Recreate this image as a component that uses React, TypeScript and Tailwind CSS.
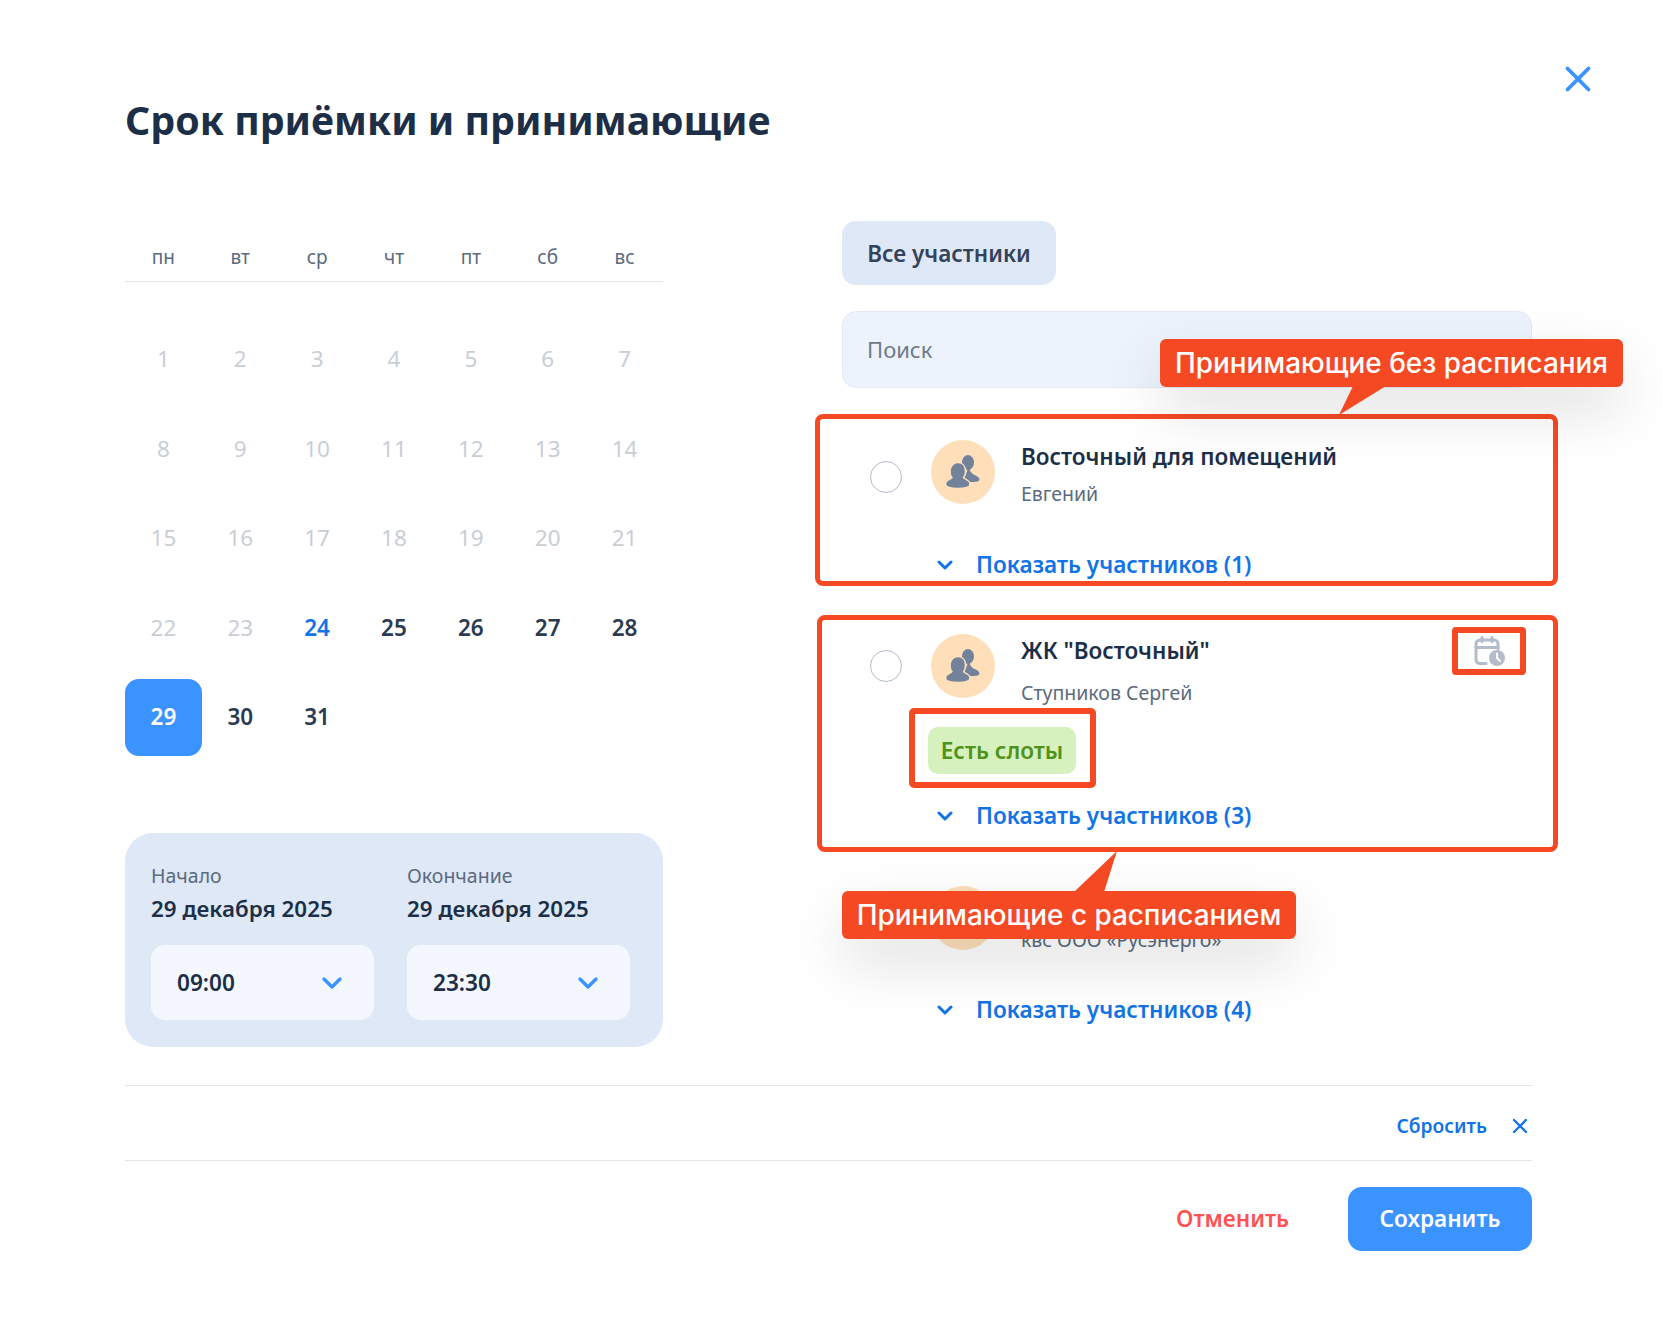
import React from 'react';
import { Search, X, ChevronDown } from 'lucide-react';

const weekDays = ['пн', 'вт', 'ср', 'чт', 'пт', 'сб', 'вс'];
const days = Array.from({ length: 31 }, (_, i) => i + 1);

function GroupIcon() {
  return (
    <svg width="64" height="64" viewBox="0 0 64 64">
      <ellipse cx="37" cy="22.500" rx="6" ry="7.500" fill="#72829b" />
      <path d="M38 26c0 4 2 7 4.500 8.500 3 1.500 6 2.500 6 5 0 1.800-3 2.500-6.500 2.500H32z" fill="#72829b" />
      <path d="M27 22.500c4.500 0 7.500 3.500 7.500 9 0 3-1 5-2 6 0 1.500 6.500 2.500 6.500 6.500 0 3-4.500 4.500-12 4.500s-12.500-1.500-12.500-4.500c0-4 6.500-5 6.500-6.500-1-1-2-3-2-6 0-5.500 3.500-9 8-9z" fill="#72829b" stroke="#fedfba" strokeWidth="1.500" />
    </svg>
  );
}

function CalendarClock() {
  return (
    <svg width="31" height="30" viewBox="0 0 31 30" fill="none">
      <path d="M12 27.500H6a4 4 0 0 1-4-4V8a4 4 0 0 1 4-4h14a4 4 0 0 1 4 4v5" stroke="#b3bccb" strokeWidth="3" strokeLinecap="round" />
      <path d="M2 11.500h22M8 1.500v4M18 1.500v4" stroke="#b3bccb" strokeWidth="3" strokeLinecap="round" />
      <circle cx="23" cy="22" r="8" fill="#b3bccb" />
      <path d="M23 17.500v4.500l3 3" stroke="#fff" strokeWidth="2" strokeLinecap="round" strokeLinejoin="round" />
    </svg>
  );
}

function TimeSelect({ value }: { value: string }) {
  return (
    <div className="flex h-[75px] w-[223px] items-center justify-between rounded-[14px] bg-[#f4f8fe] pl-[26px] pr-[26px]">
      <span className="text-[22.600px] font-semibold text-[#1d2f47]">{value}</span>
      <ChevronDown size={32} strokeWidth={2.500} className="text-[#3a93ff]" />
    </div>
  );
}

function DateBlock({ label, time }: { label: string; time: string }) {
  return (
    <div className="flex flex-col">
      <div className="text-[19.500px] leading-[26px] text-[#5b6a7e]">{label}</div>
      <div className="mb-[20px] mt-[4px] text-[22.400px] font-semibold leading-[32px] text-[#1d2f47]">29 декабря 2025</div>
      <TimeSelect value={time} />
    </div>
  );
}

function Receiver({
  name,
  sub,
  count,
  radioTop,
  subGap,
  linkGap,
  badge,
}: {
  name: string;
  sub: string;
  count: number;
  radioTop: string;
  subGap: string;
  linkGap: string;
  badge?: boolean;
}) {
  return (
    <div className="relative flex flex-col">
      <div className="flex pl-[28px]">
        <div className={`h-[32px] w-[32px] shrink-0 rounded-full border border-[#b3bccb] bg-white ${radioTop}`} />
        <div className="ml-[29px] h-[64px] w-[64px] shrink-0 rounded-full bg-[#fedfba]">
          <GroupIcon />
        </div>
        <div className="ml-[26px] flex flex-col">
          <div className="h-[34px] text-[22.500px] font-semibold leading-[34px] text-[#1d2f47]">{name}</div>
          <div className={`text-[19.500px] leading-[26px] text-[#5b6a7e] ${subGap}`}>{sub}</div>
        </div>
      </div>
      {badge && (
        <div className="ml-[86px] mt-[21px] flex h-[47px] w-[148px] items-center justify-center rounded-[10px] bg-[#d6f1bd] text-[22.600px] font-semibold text-[#4f9319]">
          Есть слоты
        </div>
      )}
      <div className={`flex h-[30px] items-center pl-[95px] ${linkGap}`}>
        <svg width="16" height="10" viewBox="0 0 16 10" fill="none">
          <path d="M2 2l6 6 6-6" stroke="#1273e6" strokeWidth="3" strokeLinecap="round" strokeLinejoin="round" />
        </svg>
        <span className="ml-[23px] text-[22.600px] font-semibold text-[#1273e6]">Показать участников ({count})</span>
      </div>
    </div>
  );
}

export default function App() {
  return (
    <div className="relative h-[1330px] w-[1663px] overflow-hidden bg-white pl-[125px] pr-[131px] pt-[92px] font-['Noto_Sans',sans-serif]">
      <X size={42} strokeWidth={2.200} className="absolute left-[1557px] top-[58px] text-[#3a93ff]" />

      <h1 className="h-[56px] text-[39.300px] font-bold leading-[56px] text-[#1d2f47]">Срок приёмки и принимающие</h1>

      <div className="mt-[73px] flex h-[826px] justify-between">
        {/* calendar and time */}
        <div className="flex w-[538px] flex-col">
          <div className="grid h-[61px] grid-cols-7 border-b border-[#e3e7ed] pt-[22px]">
            {weekDays.map((d) => (
              <div key={d} className="text-center text-[19px] leading-[28px] text-[#5b6a7e]">
                {d}
              </div>
            ))}
          </div>
          <div className="mt-[39px] grid grid-cols-7 gap-y-[12.500px]">
            {days.map((d) => {
              let color = 'text-[#c9ced6]';
              if (d === 24) color = 'text-[#1273e6] font-semibold';
              if (d > 24) color = 'text-[#2a3b52] font-semibold';
              if (d === 29) color = 'bg-[#3a93ff] text-white font-semibold rounded-[14px]';
              return (
                <div key={d} className={`flex h-[77px] items-center justify-center pb-[1px] text-[22.500px] ${color}`}>
                  {d}
                </div>
              );
            })}
          </div>
          <div className="mt-[77px] flex h-[214px] flex-col rounded-[28px] bg-[#dfe8f7] px-[26px] pt-[30px]">
            <div className="flex gap-[33px]">
              <DateBlock label="Начало" time="09:00" />
              <DateBlock label="Окончание" time="23:30" />
            </div>
          </div>
        </div>

        {/* receivers */}
        <div className="flex w-[690px] flex-col">
          <div className="flex h-[64px] w-[214px] items-center justify-center rounded-[14px] bg-[#dfe8f7] pt-[2px] text-[22.500px] font-semibold text-[#33435a]">
            Все участники
          </div>
          <div className="mt-[26px] flex h-[77px] items-center justify-between rounded-[14px] border border-[#e3eaf5] bg-[#edf3fc] pl-[24px] pr-[23px]">
            <span className="text-[22px] text-[#6d7a8c]">Поиск</span>
            <Search size={24} className="text-[#8792a3]" />
          </div>
          <div className="mt-[52px] flex flex-col">
            <Receiver name="Восточный для помещений" sub="Евгений" count={1} radioTop="mt-[21px]" subGap="mt-[7px]" linkGap="mt-[43px]" />
            <div className="mt-[54px]">
              <Receiver name='ЖК "Восточный"' sub="Ступников Сергей" count={3} radioTop="mt-[16px]" subGap="mt-[12px]" badge linkGap="mt-[27px]" />
            </div>
            <div className="mt-[55px]">
              <Receiver name="Русэнерго" sub="квс ООО «Русэнерго»" count={4} radioTop="mt-[16px]" subGap="mt-[7px]" linkGap="mt-[42px]" />
            </div>
          </div>
        </div>
      </div>

      {/* footer */}
      <div className="mt-[38px] flex h-[76px] items-center justify-end border-y border-[#e3e5e9] pt-[6px]">
        <span className="text-[19.200px] font-semibold text-[#1273e6]">Сбросить</span>
        <X size={24} strokeWidth={2.300} className="ml-[21px] text-[#1273e6]" />
      </div>
      <div className="mt-[26px] flex items-center justify-end">
        <span className="text-[22.600px] font-semibold text-[#ff5252]">Отменить</span>
        <div className="ml-[59px] flex h-[64px] w-[184px] items-center justify-center rounded-[14px] bg-[#3a93ff] text-[22.600px] font-semibold text-white">
          Сохранить
        </div>
      </div>

      {/* annotations over the screenshot */}
      <div className="pointer-events-none absolute left-[815px] top-[414px] h-[172px] w-[743px] rounded-[8px] border-[5px] border-[#f54923]" />
      <div className="pointer-events-none absolute left-[817px] top-[615px] h-[237px] w-[741px] rounded-[8px] border-[5px] border-[#f54923]" />
      <div className="pointer-events-none absolute left-[909px] top-[708px] h-[80px] w-[187px] rounded-[5px] border-[6px] border-[#f54923]" />
      <div className="absolute left-[1452px] top-[627px] flex h-[48px] w-[74px] items-center justify-center rounded-[4px] border-[6px] border-[#f54923] bg-white">
        <CalendarClock />
      </div>

      <div className="absolute left-[1160px] top-[339px] flex h-[48px] w-[463px] items-center justify-center rounded-[6px] bg-[#f54923] pt-[2px] font-['Inter',sans-serif] text-[27.900px] font-medium text-white shadow-[0_24px_60px_rgba(0,0,0,0.13)]">
        Принимающие без расписания
      </div>
      <svg className="absolute left-[1339px] top-[386px]" width="47" height="29" viewBox="0 0 47 29">
        <path d="M14 0h33L0 29z" fill="#f54923" />
      </svg>

      <div className="absolute left-[842px] top-[891px] flex h-[48px] w-[454px] items-center justify-center rounded-[6px] bg-[#f54923] pt-[2px] font-['Inter',sans-serif] text-[27.900px] font-medium text-white shadow-[0_24px_60px_rgba(0,0,0,0.13)]">
        Принимающие с расписанием
      </div>
      <svg className="absolute left-[1074px] top-[851px]" width="44" height="41" viewBox="0 0 44 41">
        <path d="M43 0L30 41H0z" fill="#f54923" />
      </svg>
    </div>
  );
}
